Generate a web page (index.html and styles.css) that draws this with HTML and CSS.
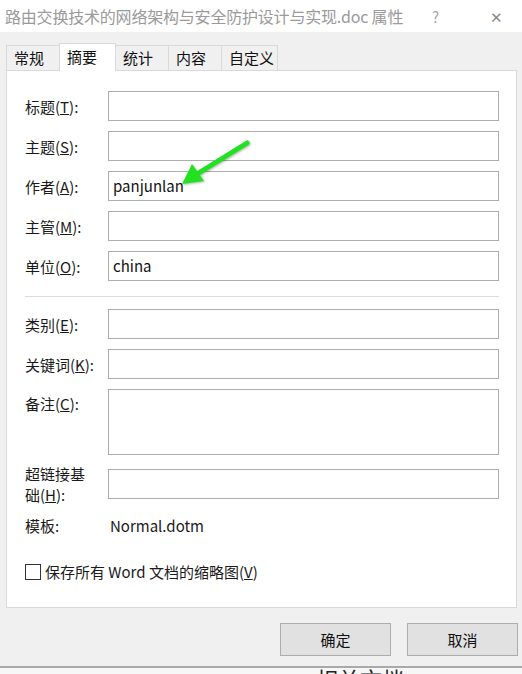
FILE: index.html
```html
<!DOCTYPE html>
<html lang="zh-CN">
<head>
    <meta charset="UTF-8">
    <meta name="viewport" content="width=device-width, initial-scale=1.0">
    <title>文档属性</title>
    <link rel="stylesheet" href="styles.css">
</head>
<body>
    <div class="titlebar">
        <span class="title">路由交换技术的网络架构与安全防护设计与实现.doc 属性</span>
        <span class="help">?</span>
        <span class="close">✕</span>
    </div>

    <div class="dialog">
        <div class="tabs">
            <div class="tab">常规</div>
            <div class="tab active">摘要</div>
            <div class="tab">统计</div>
            <div class="tab">内容</div>
            <div class="tab">自定义</div>
        </div>

        <div class="panel">
            <div class="row">
                <label>标题(<u>T</u>):</label>
                <div class="field"></div>
            </div>
            <div class="row">
                <label>主题(<u>S</u>):</label>
                <div class="field"></div>
            </div>
            <div class="row">
                <label>作者(<u>A</u>):</label>
                <div class="field">panjunlan</div>
            </div>
            <div class="row">
                <label>主管(<u>M</u>):</label>
                <div class="field"></div>
            </div>
            <div class="row">
                <label>单位(<u>O</u>):</label>
                <div class="field">china</div>
            </div>

            <div class="separator"></div>

            <div class="row">
                <label>类别(<u>E</u>):</label>
                <div class="field"></div>
            </div>
            <div class="row">
                <label>关键词(<u>K</u>):</label>
                <div class="field"></div>
            </div>
            <div class="row row-top">
                <label>备注(<u>C</u>):</label>
                <div class="field field-tall"></div>
            </div>
            <div class="row row-wrap">
                <label>超链接基础(<u>H</u>):</label>
                <div class="field"></div>
            </div>
            <div class="row row-info">
                <label>模板:</label>
                <div class="value">Normal.dotm</div>
            </div>

            <div class="check-row">
                <span class="checkbox"></span>
                <span>保存所有 Word 文档的缩略图(<u>V</u>)</span>
            </div>

            <!-- green annotation arrow pointing at the author field -->
            <svg class="arrow" width="90" height="60" viewBox="0 0 90 60">
                <line x1="76" y1="12" x2="26" y2="43" stroke="#22e022" stroke-width="5" stroke-linecap="round"/>
                <polygon points="11,53 21,33 33,50" fill="#22e022"/>
            </svg>
        </div>

        <div class="buttons">
            <button>确定</button>
            <button>取消</button>
        </div>
    </div>

    <div class="below">
        <span class="below-text">相关文档</span>
    </div>
</body>
</html>
```

FILE: styles.css
```css
html {
    overflow: hidden;
}
body {
    margin: 0;
    background-color: #f0f0f0;
    font-family: "Noto Sans CJK SC", "Noto Sans", sans-serif;
    font-size: 15px;
    color: #1a1a1a;
}
.titlebar {
    height: 32px;
    background-color: #ffffff;
    display: flex;
    align-items: center;
    padding-left: 5px;
    color: #9a9a9a;
    font-size: 16px;
}
.title {
    flex: 1;
    white-space: nowrap;
    letter-spacing: -0.2px;
}
.help {
    width: 20px;
    margin-right: 38px;
    font-size: 15px;
    color: #a8a8a8;
}
.close {
    width: 32px;
    font-size: 15px;
    color: #8a8a8a;
}
.dialog {
    padding: 0 5px 0 6px;
}
.tabs {
    display: flex;
    align-items: flex-end;
    height: 38px;
    position: relative;
    z-index: 1;
}
.tab {
    box-sizing: border-box;
    min-width: 54px;
    height: 25px;
    padding: 0 3px 0 7px;
    line-height: 24px;
    border: 1px solid #d9d9d9;
    border-bottom: none;
    margin-left: -1px;
    background-color: #f0f0f0;
    color: #111;
}
.tab:first-child {
    margin-left: 0;
}
.tab.active {
    height: 28px;
    min-width: 57px;
    margin-bottom: -1px;
    line-height: 25px;
    background-color: #ffffff;
    padding-bottom: 3px;
}
.panel {
    position: relative;
    box-sizing: border-box;
    height: 538px;
    background-color: #ffffff;
    border: 1px solid #d9d9d9;
    padding: 20px 17px 0 18px;
}
.row {
    display: grid;
    grid-template-columns: 83px 1fr;
    align-items: center;
    margin-bottom: 10px;
}
.row label {
    max-width: 72px;
    line-height: 21px;
}
.field {
    box-sizing: border-box;
    height: 30px;
    border: 1px solid #adadad;
    padding: 0 4px;
    line-height: 27px;
    color: #111;
}
.field-tall {
    height: 66px;
}
.row-top {
    align-items: start;
    margin-bottom: 8px;
}
.row-top label {
    line-height: 30px;
}
.row-wrap {
    margin-bottom: 5px;
}
.row-info {
    height: 30px;
    margin-bottom: 0;
}
.value {
    padding-left: 2px;
}
.separator {
    height: 1px;
    background-color: #dcdcdc;
    margin: 15px 0 12px;
}
.check-row {
    display: flex;
    align-items: center;
    gap: 4px;
    margin-top: 24px;
    line-height: 16px;
}
.checkbox {
    box-sizing: border-box;
    width: 16px;
    height: 16px;
    border: 1px solid #333333;
    background-color: #ffffff;
}
.arrow {
    position: absolute;
    left: 164px;
    top: 60px;
    filter: drop-shadow(1px 1px 1px rgba(0, 60, 0, 0.35));
}
.buttons {
    display: flex;
    justify-content: flex-end;
    gap: 16px;
    padding: 15px 0 0;
    margin-right: -1px;
}
.buttons button {
    width: 111px;
    height: 33px;
    background-color: #e1e1e1;
    border: 1px solid #adadad;
    font-family: inherit;
    font-size: 15px;
    color: #111;
    padding: 0;
}
.below {
    margin-top: 10px;
    border-top: 2px solid #a9a9a9;
    height: 40px;
    background-color: #f7f7f7;
    position: relative;
    overflow: hidden;
}
.below-text {
    position: absolute;
    left: 316px;
    top: -1px;
    font-size: 22px;
    line-height: 22px;
    color: #222;
}
```
